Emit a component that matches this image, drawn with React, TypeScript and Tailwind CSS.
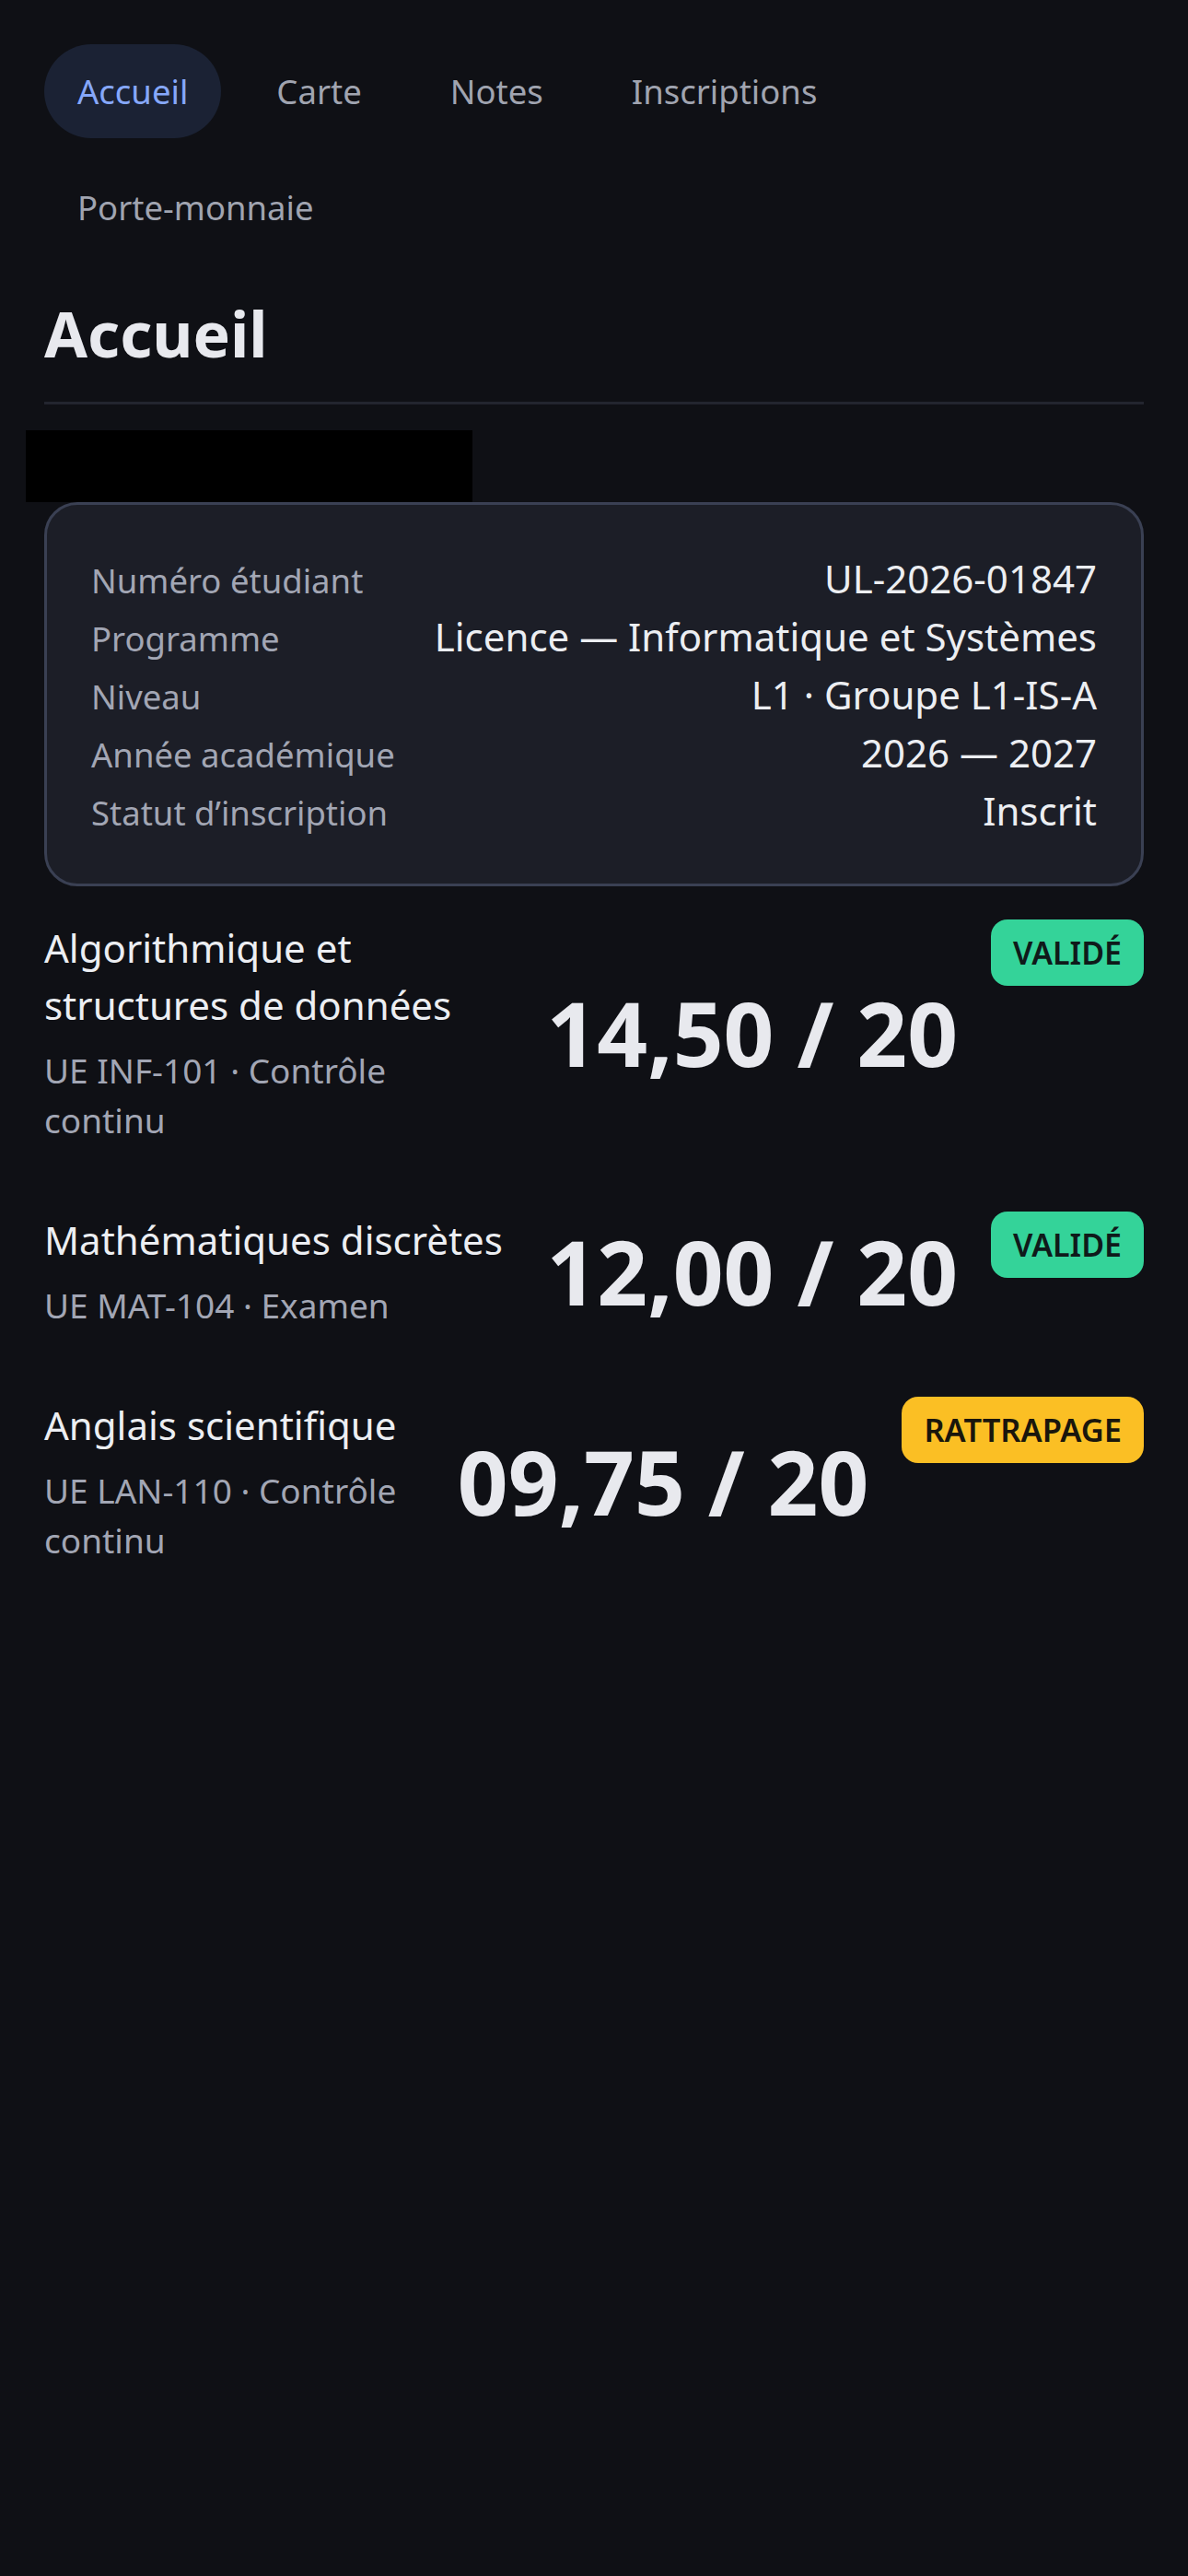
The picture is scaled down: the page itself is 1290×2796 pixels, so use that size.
import React from "react";

const navItems = ["Accueil", "Carte", "Notes", "Inscriptions", "Porte-monnaie"];

const infoRows: [string, string][] = [
  ["Numéro étudiant", "UL-2026-01847"],
  ["Programme", "Licence — Informatique et Systèmes"],
  ["Niveau", "L1 · Groupe L1-IS-A"],
  ["Année académique", "2026 — 2027"],
  ["Statut d’inscription", "Inscrit"],
];

type Grade = {
  title: string;
  sub: string;
  grade: string;
  status: "ok" | "retry";
};

const grades: Grade[] = [
  {
    title: "Algorithmique et structures de données",
    sub: "UE INF-101 · Contrôle continu",
    grade: "14,50 / 20",
    status: "ok",
  },
  {
    title: "Mathématiques discrètes",
    sub: "UE MAT-104 · Examen",
    grade: "12,00 / 20",
    status: "ok",
  },
  {
    title: "Anglais scientifique",
    sub: "UE LAN-110 · Contrôle continu",
    grade: "09,75 / 20",
    status: "retry",
  },
];

export default function App() {
  return (
    <div
      className="min-h-[2796px] w-full bg-[#0f1015] px-[48px] pt-[48px] text-[#e5e7eb]"
      style={{ fontFamily: '"Noto Sans", "Open Sans", sans-serif' }}
    >
      <nav className="flex flex-wrap gap-[24px]">
        {navItems.map((item, i) => (
          <div
            key={item}
            className={
              i === 0
                ? "rounded-full bg-[#1b2234] px-[36px] py-[24px] text-[36.5px] leading-[54px] text-[#86a8fb]"
                : "rounded-full px-[36px] py-[24px] text-[36.5px] leading-[54px] text-[#a0a4b0]"
            }
          >
            {item}
          </div>
        ))}
      </nav>

      <h1 className="mt-[46px] border-b-[3px] border-[#23252f] pb-[34px] text-[68px] font-bold leading-[80px] text-[#e8e9ee]">
        Accueil
      </h1>

      <div className="-ml-[20px] mt-[28px] h-[78px] w-[485px] bg-black" />

      <section className="rounded-[36px] border-[3px] border-[#3a4053] bg-[#1c1e27] p-[48px]">
        {infoRows.map(([label, value]) => (
          <div key={label} className="flex h-[63px] items-baseline justify-between gap-[24px]">
            <span className="text-[36.5px] leading-[63px] text-[#a2a6b4]">{label}</span>
            <span className="text-[42px] leading-[63px] text-[#eceef2]">{value}</span>
          </div>
        ))}
      </section>

      <div className="mt-[36px] flex flex-col gap-[72px]">
        {grades.map((g) => (
          <div key={g.title} className="flex items-center gap-[36px]">
            <div className="min-w-0 flex-1">
              <div className="text-[42px] leading-[62px] text-[#eceef2]">{g.title}</div>
              <div className="mt-[13px] text-[37px] leading-[54px] text-[#a2a6b4]">{g.sub}</div>
            </div>
            <div className="shrink-0 text-[96px] font-bold leading-[128px] text-[#e8e9ee]">
              {g.grade}
            </div>
            <div
              className={
                g.status === "ok"
                  ? "shrink-0 self-start rounded-[18px] bg-[#34d399] px-[24px] py-[12px] text-[34px] font-semibold leading-[48px] text-[#0f1a1a]"
                  : "shrink-0 self-start rounded-[18px] bg-[#fbbf24] px-[24px] py-[12px] text-[34.5px] font-semibold leading-[48px] text-[#1a160c]"
              }
            >
              {g.status === "ok" ? "VALIDÉ" : "RATTRAPAGE"}
            </div>
          </div>
        ))}
      </div>
    </div>
  );
}
